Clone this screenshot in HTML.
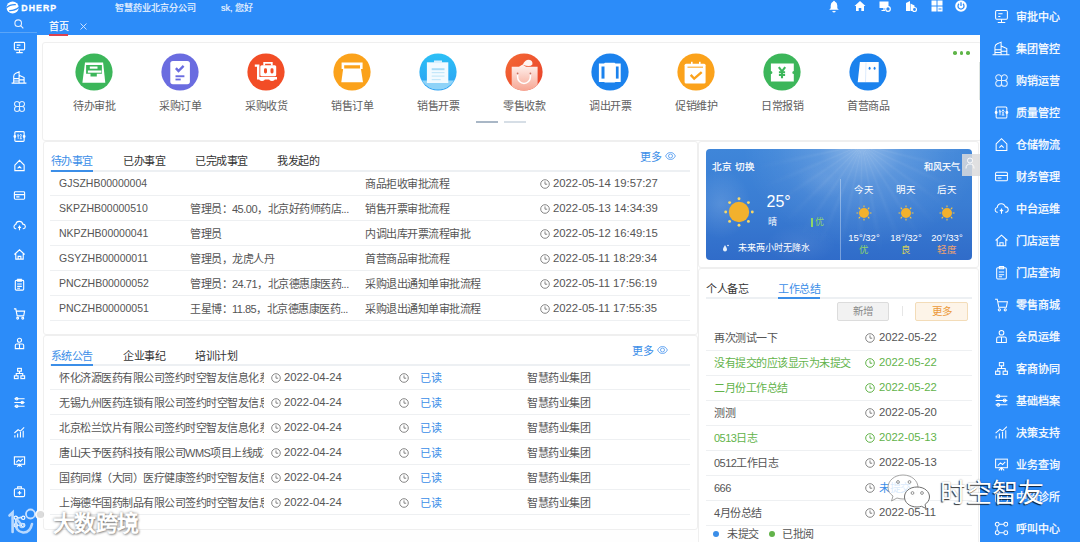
<!DOCTYPE html>
<html lang="zh-CN"><head><meta charset="utf-8">
<style>
*{box-sizing:border-box;margin:0;padding:0}
body{width:1080px;height:542px;overflow:hidden;position:relative;background:#2c8cf9;font-family:"Liberation Sans",sans-serif;color:#555}
.a{position:absolute}
.nw{white-space:nowrap}
#main{left:37px;top:35.3px;width:943px;height:507px;background:#fefefe}
.card{position:absolute;background:#fff;border:1px solid #efefef;border-radius:3px}
.ic{position:absolute;width:38px;height:38px;border-radius:50%}
.lbl{position:absolute;font-size:11px;letter-spacing:-0.5px;color:#606060;width:80px;text-align:center;line-height:12px}
.tab{position:absolute;font-size:11px;letter-spacing:-0.5px;color:#333;line-height:12px}
.tab.on{color:#3b8ee8}
.row{position:absolute;height:25px;border-bottom:1px solid #eef0f2}
.d{position:absolute;font-size:11.3px;line-height:12px;color:#555;white-space:nowrap}
.c{position:absolute;font-size:10.5px;line-height:12px;color:#555;white-space:nowrap}
.t{position:absolute;font-size:11px;letter-spacing:-0.5px;line-height:12px;color:#555;white-space:nowrap}
.clk{position:absolute;width:9px;height:9px;border:1px solid #666;border-radius:50%}
.clk:after{content:"";position:absolute;left:3px;top:1px;width:2px;height:3px;border-left:1px solid #666;border-bottom:1px solid #666}
.sbt{-webkit-text-stroke:0.25px #fff}
.rs{position:absolute;left:980px;width:100px;height:32px}
.rs .tx{position:absolute;left:36px;top:10px;font-size:11px;line-height:12px;color:#fff;white-space:nowrap}
.rs svg{position:absolute;left:14px;top:8px}
.ls{position:absolute;left:12px;width:14px;height:14px}
</style></head><body>
<!-- header -->
<div class="a" style="left:0;top:0;width:980px;height:35.3px;background:#2c8cf9"></div>
<div class="a nw" style="left:21.3px;top:2px;font-size:8.7px;font-weight:bold;color:#fff;line-height:12px;letter-spacing:1.1px;-webkit-text-stroke:0.3px #fff">DHERP</div>
<div class="a nw" style="left:114.5px;top:2.5px;font-size:9px;color:#eaf3ff;line-height:11px;-webkit-text-stroke:0.2px #eaf3ff">智慧药业北京分公司</div>
<div class="a nw" style="left:221px;top:2.5px;font-size:9px;color:#eaf3ff;line-height:11px;-webkit-text-stroke:0.2px #eaf3ff">sk, 您好</div>
<div class="a nw" style="left:49px;top:21px;font-size:10px;color:#fff;line-height:12px;-webkit-text-stroke:0.2px #fff">首页</div>
<div class="a" style="left:49px;top:33.6px;width:19px;height:2px;background:#dc4150;z-index:5"></div>
<svg class="a" style="left:79.5px;top:22.5px" width="7" height="7" viewBox="0 0 7 7"><path d="M0.5 0.5L6.5 6.5M6.5 0.5L0.5 6.5" stroke="#dceaff" stroke-width="0.9"/></svg>
<div class="a" style="left:0;top:32px;width:37px;height:1px;background:#5aa5f8"></div>

<div id="main" class="a"></div>
<!-- card1 -->
<div class="card" style="left:42px;top:42px;width:940px;height:99px"></div><div class="a" style="left:978.5px;top:62px;width:1.5px;height:38px;background:#dfe5e2"></div>
<div class="card" style="left:43px;top:141px;width:655px;height:194px"></div>
<div class="card" style="left:43px;top:335px;width:655px;height:195px"></div>
<div class="card" style="left:698px;top:141px;width:281px;height:127px"></div>
<div class="card" style="left:698px;top:268px;width:281px;height:280px"></div>

<!-- icon row -->
<svg class="a" style="left:75px;top:53.3px" width="38" height="38" viewBox="0 0 38 38"><circle cx="19" cy="19" r="18.6" fill="#3cb65a"/>
<path d="M10 9.4H28.1L30.3 29.7H7.4Z" fill="#fff"/>
<path d="M11.1 12H26.9V20.8H21.8V23.4H15.5V20.8H11.1Z" fill="#3cb65a"/>
<rect x="14.8" y="13.5" width="7.7" height="2.2" fill="#fff"/><rect x="12.9" y="17.5" width="13.5" height="2.2" fill="#fff"/></svg>
<div class="lbl" style="left:54px;top:100px">待办审批</div>
<svg class="a" style="left:161px;top:53.3px" width="38" height="38" viewBox="0 0 38 38"><circle cx="19" cy="19" r="18.6" fill="#6a6ce0"/>
<rect x="9.3" y="7.9" width="19.6" height="23.3" rx="2.6" fill="#fff"/>
<path d="M14.9 15.1L17.5 18L22.6 12.9" stroke="#6a6ce0" stroke-width="2.4" fill="none"/>
<rect x="14.5" y="22.3" width="8.9" height="1.9" fill="#6a6ce0"/>
<rect x="14.5" y="25.6" width="5.2" height="1.8" fill="#6a6ce0"/></svg>
<div class="lbl" style="left:140px;top:100px">采购订单</div>
<svg class="a" style="left:247px;top:53.3px" width="38" height="38" viewBox="0 0 38 38"><circle cx="19" cy="19" r="18.6" fill="#f24d26"/>
<path d="M7.8 12.6H11.2V25.2H30" stroke="#fff" stroke-width="2.4" fill="none"/>
<rect x="13.3" y="12.2" width="15.9" height="11" rx="1.5" fill="#fff"/>
<path d="M17.2 12.5V9.8H24.8V12.5" stroke="#fff" stroke-width="1.8" fill="none"/>
<rect x="17" y="15.3" width="3" height="5.2" rx="1.4" fill="#f24d26"/><rect x="23.5" y="15.3" width="3" height="5.2" rx="1.4" fill="#f24d26"/>
<path d="M12 25H18A3 3 0 0 1 12 25ZM22 25H28A3 3 0 0 1 22 25Z" fill="#fff"/></svg>
<div class="lbl" style="left:226px;top:100px">采购收货</div>
<svg class="a" style="left:333px;top:53.3px" width="38" height="38" viewBox="0 0 38 38"><circle cx="19" cy="19" r="18.6" fill="#fba21b"/>
<path d="M8.6 9.6H29.6V16H27V12.2H11.2V16H8.6Z" fill="#fff"/>
<path d="M10.2 15.6H27.9L30 29.2H8.3Z" fill="#fff"/></svg>
<div class="lbl" style="left:312px;top:100px">销售订单</div>
<svg class="a" style="left:419px;top:53.3px" width="38" height="38" viewBox="0 0 38 38"><defs><linearGradient id="g5" x1="0" y1="0" x2="0" y2="1"><stop offset="0" stop-color="#2cc0f6"/><stop offset="1" stop-color="#2b9ff2"/></linearGradient></defs>
<circle cx="19" cy="19" r="18.6" fill="url(#g5)"/>
<path d="M3 27.5H35A18.6 18.6 0 0 1 3 27.5Z" fill="#8fd3f8"/>
<rect x="7.9" y="9.3" width="21.4" height="20.7" fill="#f2faff"/>
<rect x="15" y="7.5" width="8" height="2.6" fill="#d8f0fd"/>
<rect x="12.7" y="15.2" width="12.8" height="2" fill="#a8dcf7"/><rect x="12.7" y="19" width="12.8" height="1.2" fill="#c4e7fa"/><rect x="12.7" y="22.5" width="12.8" height="1.2" fill="#c4e7fa"/><rect x="12.7" y="26" width="9" height="1.2" fill="#c4e7fa"/></svg>
<div class="lbl" style="left:398px;top:100px">销售开票</div>
<svg class="a" style="left:505px;top:53.3px" width="38" height="38" viewBox="0 0 38 38"><defs><linearGradient id="g6" x1="0" y1="0" x2="1" y2="1"><stop offset="0" stop-color="#f46a35"/><stop offset="1" stop-color="#e8402a"/></linearGradient><linearGradient id="b6" x1="0" y1="0" x2="0" y2="1"><stop offset="0" stop-color="#fff3ef"/><stop offset="1" stop-color="#f6a390"/></linearGradient><clipPath id="c6"><circle cx="19" cy="19" r="18.6"/></clipPath></defs>
<circle cx="19" cy="19" r="18.6" fill="url(#g6)"/>
<g clip-path="url(#c6)"><path d="M6.7 13.8H14L17.5 11.5L21 13.8H32.6V38H6.7Z" fill="url(#b6)"/></g>
<path d="M12.6 20.5V24A6.4 6.4 0 0 0 25.4 24V20.5" stroke="#fff" stroke-width="1.5" fill="none"/>
<circle cx="12.6" cy="20.5" r="0.9" fill="#c96e5d"/><circle cx="25.4" cy="20.5" r="0.9" fill="#c96e5d"/>
<path d="M17.8 11.8Q20 6.5 24 6.7Q28 7.2 27.4 11.5Q25 14.5 17.8 11.8Z" fill="#fff5f2"/></svg>
<div class="lbl" style="left:484px;top:100px">零售收款</div>
<svg class="a" style="left:591px;top:53.3px" width="38" height="38" viewBox="0 0 38 38"><circle cx="19" cy="19" r="18.6" fill="#1b82ed"/>
<path d="M7.9 10.5H13L14 9.8H23.5L24.5 10.5H29.7V29H24.5L23.5 29.6H14L13 29H7.9Z" fill="#fff"/>
<rect x="10.5" y="13.5" width="3" height="12.1" fill="#1b82ed"/><rect x="24.9" y="13.5" width="2.7" height="12.1" fill="#1b82ed"/></svg>
<div class="lbl" style="left:570px;top:100px">调出开票</div>
<svg class="a" style="left:677px;top:53.3px" width="38" height="38" viewBox="0 0 38 38"><circle cx="19" cy="19" r="18.6" fill="#fba21b"/>
<rect x="7.6" y="10.7" width="21" height="19.9" rx="1.5" fill="#fff"/>
<rect x="10.5" y="13.6" width="15.5" height="1.2" fill="#fba21b" opacity="0.85"/>
<rect x="14" y="8.8" width="1.6" height="3.5" fill="#fff"/><rect x="22" y="8.8" width="1.6" height="3.5" fill="#fff"/>
<path d="M13.7 21.9L17.2 25.7L24.7 19.2" stroke="#fba21b" stroke-width="2.4" fill="none"/></svg>
<div class="lbl" style="left:656px;top:100px">促销维护</div>
<svg class="a" style="left:763px;top:53.3px" width="38" height="38" viewBox="0 0 38 38"><circle cx="19" cy="19" r="18.6" fill="#3cb65a"/>
<path d="M7.9 10.5H30.8V17.9A1.5 1.5 0 0 0 30.8 20.9V28.6H7.9V20.9A1.5 1.5 0 0 0 7.9 17.9Z" fill="#fff"/>
<path d="M15.8 14.2L19 18.3L22.2 14.2M19 18.3V25.2M15.9 19.3H22.1M15.9 22H22.1" stroke="#3cb65a" stroke-width="2.1" fill="none"/></svg>
<div class="lbl" style="left:742px;top:100px">日常报销</div>
<svg class="a" style="left:849px;top:53.3px" width="38" height="38" viewBox="0 0 38 38"><circle cx="19" cy="19" r="18.6" fill="#1b82ed"/>
<path d="M10.9 9H29.7V29.3H16.4L16.8 17L16.4 29.3H8.7Z" fill="#fff"/>
<path d="M17 9.5L16.5 29" stroke="#cfe3fb" stroke-width="0.7"/>
<ellipse cx="20.6" cy="15.3" rx="0.95" ry="1.5" fill="#1b82ed"/><ellipse cx="25.6" cy="15.3" rx="0.95" ry="1.5" fill="#1b82ed"/></svg>
<div class="lbl" style="left:828px;top:100px">首营商品</div>
<div class="a" style="left:476px;top:121px;width:22px;height:2px;background:#a9b7c6"></div>
<div class="a" style="left:504px;top:121px;width:22px;height:2px;background:#d6dee6"></div>
<div class="a" style="left:953.2px;top:51.2px;width:3.5px;height:3.5px;border-radius:50%;background:#5fb548"></div><div class="a" style="left:959.8px;top:51.2px;width:3.5px;height:3.5px;border-radius:50%;background:#5fb548"></div><div class="a" style="left:966.4px;top:51.2px;width:3.5px;height:3.5px;border-radius:50%;background:#5fb548"></div>
<!-- card2 todo -->
<div class="a" style="left:50px;top:169.5px;width:640px;height:2px;background:#edf0f3"></div>
<div class="tab on" style="left:50.5px;top:155px">待办事宜</div>
<div class="tab" style="left:123px;top:155px">已办事宜</div>
<div class="tab" style="left:195px;top:155px">已完成事宜</div>
<div class="tab" style="left:277px;top:155px">我发起的</div>
<div class="a" style="left:50.5px;top:169.5px;width:42.5px;height:2px;background:#3b8ee8"></div>
<div class="t" style="left:640px;top:150.6px;color:#3b8ee8">更多</div>
<svg class="a" style="left:665px;top:152px" width="11" height="8" viewBox="0 0 11 8"><path d="M0.6 4C2 1.2 3.8 0.5 5.5 0.5S9 1.2 10.4 4C9 6.8 7.2 7.5 5.5 7.5S2 6.8 0.6 4Z" fill="none" stroke="#5a9ff0" stroke-width="0.9"/><circle cx="5.5" cy="4" r="2" fill="none" stroke="#5a9ff0" stroke-width="0.9"/></svg>
<div class="a" style="left:50px;top:195px;width:640px;height:1px;background:#eef0f2"></div>
<div class="c" style="left:59px;top:177.0px">GJSZHB00000004</div>
<div class="t" style="left:365px;top:177.6px">商品拒收审批流程</div>
<svg class="a" style="left:540px;top:178.8px" width="10" height="10" viewBox="0 0 10 10"><circle cx="5" cy="5" r="4.3" fill="none" stroke="#808080" stroke-width="0.95"/><path d="M5 2.4V5.2H7.2" fill="none" stroke="#808080" stroke-width="0.95"/></svg>
<div class="d" style="left:553px;top:177.0px">2022-05-14 19:57:27</div>
<div class="a" style="left:50px;top:220px;width:640px;height:1px;background:#eef0f2"></div>
<div class="c" style="left:59px;top:202.0px">SKPZHB00000510</div>
<div class="t" style="left:190px;top:202.6px">管理员：45.00，北京好药师药店...</div>
<div class="t" style="left:365px;top:202.6px">销售开票审批流程</div>
<svg class="a" style="left:540px;top:203.8px" width="10" height="10" viewBox="0 0 10 10"><circle cx="5" cy="5" r="4.3" fill="none" stroke="#808080" stroke-width="0.95"/><path d="M5 2.4V5.2H7.2" fill="none" stroke="#808080" stroke-width="0.95"/></svg>
<div class="d" style="left:553px;top:202.0px">2022-05-13 14:34:39</div>
<div class="a" style="left:50px;top:245px;width:640px;height:1px;background:#eef0f2"></div>
<div class="c" style="left:59px;top:227.0px">NKPZHB00000041</div>
<div class="t" style="left:190px;top:227.6px">管理员</div>
<div class="t" style="left:365px;top:227.6px">内调出库开票流程审批</div>
<svg class="a" style="left:540px;top:228.8px" width="10" height="10" viewBox="0 0 10 10"><circle cx="5" cy="5" r="4.3" fill="none" stroke="#808080" stroke-width="0.95"/><path d="M5 2.4V5.2H7.2" fill="none" stroke="#808080" stroke-width="0.95"/></svg>
<div class="d" style="left:553px;top:227.0px">2022-05-12 16:49:15</div>
<div class="a" style="left:50px;top:270px;width:640px;height:1px;background:#eef0f2"></div>
<div class="c" style="left:59px;top:252.0px">GSYZHB00000011</div>
<div class="t" style="left:190px;top:252.6px">管理员，龙虎人丹</div>
<div class="t" style="left:365px;top:252.6px">首营商品审批流程</div>
<svg class="a" style="left:540px;top:253.8px" width="10" height="10" viewBox="0 0 10 10"><circle cx="5" cy="5" r="4.3" fill="none" stroke="#808080" stroke-width="0.95"/><path d="M5 2.4V5.2H7.2" fill="none" stroke="#808080" stroke-width="0.95"/></svg>
<div class="d" style="left:553px;top:252.0px">2022-05-11 18:29:34</div>
<div class="a" style="left:50px;top:295px;width:640px;height:1px;background:#eef0f2"></div>
<div class="c" style="left:59px;top:277.0px">PNCZHB00000052</div>
<div class="t" style="left:190px;top:277.6px">管理员：24.71，北京德惠康医药...</div>
<div class="t" style="left:365px;top:277.6px">采购退出通知单审批流程</div>
<svg class="a" style="left:540px;top:278.8px" width="10" height="10" viewBox="0 0 10 10"><circle cx="5" cy="5" r="4.3" fill="none" stroke="#808080" stroke-width="0.95"/><path d="M5 2.4V5.2H7.2" fill="none" stroke="#808080" stroke-width="0.95"/></svg>
<div class="d" style="left:553px;top:277.0px">2022-05-11 17:56:19</div>
<div class="a" style="left:50px;top:320px;width:640px;height:1px;background:#eef0f2"></div>
<div class="c" style="left:59px;top:302.0px">PNCZHB00000051</div>
<div class="t" style="left:190px;top:302.6px">王星博：11.85，北京德惠康医药...</div>
<div class="t" style="left:365px;top:302.6px">采购退出通知单审批流程</div>
<svg class="a" style="left:540px;top:303.8px" width="10" height="10" viewBox="0 0 10 10"><circle cx="5" cy="5" r="4.3" fill="none" stroke="#808080" stroke-width="0.95"/><path d="M5 2.4V5.2H7.2" fill="none" stroke="#808080" stroke-width="0.95"/></svg>
<div class="d" style="left:553px;top:302.0px">2022-05-11 17:55:35</div>
<!-- card3 notice -->
<div class="a" style="left:50px;top:364px;width:640px;height:2px;background:#edf0f3"></div>
<div class="tab on" style="left:50.5px;top:350px">系统公告</div>
<div class="tab" style="left:123px;top:350px">企业事纪</div>
<div class="tab" style="left:195px;top:350px">培训计划</div>
<div class="a" style="left:50.5px;top:364px;width:42.5px;height:2px;background:#3b8ee8"></div>
<div class="t" style="left:632px;top:344.6px;color:#3b8ee8">更多</div>
<svg class="a" style="left:657px;top:346px" width="11" height="8" viewBox="0 0 11 8"><path d="M0.6 4C2 1.2 3.8 0.5 5.5 0.5S9 1.2 10.4 4C9 6.8 7.2 7.5 5.5 7.5S2 6.8 0.6 4Z" fill="none" stroke="#5a9ff0" stroke-width="0.9"/><circle cx="5.5" cy="4" r="2" fill="none" stroke="#5a9ff0" stroke-width="0.9"/></svg>
<div class="a" style="left:50px;top:389px;width:640px;height:1px;background:#eef0f2"></div>
<div class="t" style="left:59px;top:371.6px;width:205px;overflow:hidden">怀化济源医药有限公司签约时空智友信息化系统</div>
<svg class="a" style="left:271px;top:372.8px" width="10" height="10" viewBox="0 0 10 10"><circle cx="5" cy="5" r="4.3" fill="none" stroke="#808080" stroke-width="0.95"/><path d="M5 2.4V5.2H7.2" fill="none" stroke="#808080" stroke-width="0.95"/></svg>
<div class="d" style="left:284px;top:371.0px">2022-04-24</div>
<svg class="a" style="left:399px;top:372.8px" width="10" height="10" viewBox="0 0 10 10"><circle cx="5" cy="5" r="4.3" fill="none" stroke="#808080" stroke-width="0.95"/><path d="M5 2.4V5.2H7.2" fill="none" stroke="#808080" stroke-width="0.95"/></svg>
<div class="t" style="left:420px;top:371.6px;color:#3b8ee8">已读</div>
<div class="t" style="left:527px;top:371.6px">智慧药业集团</div>
<div class="a" style="left:50px;top:414px;width:640px;height:1px;background:#eef0f2"></div>
<div class="t" style="left:59px;top:396.6px;width:205px;overflow:hidden">无锡九州医药连锁有限公司签约时空智友信息化</div>
<svg class="a" style="left:271px;top:397.8px" width="10" height="10" viewBox="0 0 10 10"><circle cx="5" cy="5" r="4.3" fill="none" stroke="#808080" stroke-width="0.95"/><path d="M5 2.4V5.2H7.2" fill="none" stroke="#808080" stroke-width="0.95"/></svg>
<div class="d" style="left:284px;top:396.0px">2022-04-24</div>
<svg class="a" style="left:399px;top:397.8px" width="10" height="10" viewBox="0 0 10 10"><circle cx="5" cy="5" r="4.3" fill="none" stroke="#808080" stroke-width="0.95"/><path d="M5 2.4V5.2H7.2" fill="none" stroke="#808080" stroke-width="0.95"/></svg>
<div class="t" style="left:420px;top:396.6px;color:#3b8ee8">已读</div>
<div class="t" style="left:527px;top:396.6px">智慧药业集团</div>
<div class="a" style="left:50px;top:439px;width:640px;height:1px;background:#eef0f2"></div>
<div class="t" style="left:59px;top:421.6px;width:205px;overflow:hidden">北京松兰饮片有限公司签约时空智友信息化系统</div>
<svg class="a" style="left:271px;top:422.8px" width="10" height="10" viewBox="0 0 10 10"><circle cx="5" cy="5" r="4.3" fill="none" stroke="#808080" stroke-width="0.95"/><path d="M5 2.4V5.2H7.2" fill="none" stroke="#808080" stroke-width="0.95"/></svg>
<div class="d" style="left:284px;top:421.0px">2022-04-24</div>
<svg class="a" style="left:399px;top:422.8px" width="10" height="10" viewBox="0 0 10 10"><circle cx="5" cy="5" r="4.3" fill="none" stroke="#808080" stroke-width="0.95"/><path d="M5 2.4V5.2H7.2" fill="none" stroke="#808080" stroke-width="0.95"/></svg>
<div class="t" style="left:420px;top:421.6px;color:#3b8ee8">已读</div>
<div class="t" style="left:527px;top:421.6px">智慧药业集团</div>
<div class="a" style="left:50px;top:464px;width:640px;height:1px;background:#eef0f2"></div>
<div class="t" style="left:59px;top:446.6px;width:205px;overflow:hidden">唐山天予医药科技有限公司WMS项目上线成功</div>
<svg class="a" style="left:271px;top:447.8px" width="10" height="10" viewBox="0 0 10 10"><circle cx="5" cy="5" r="4.3" fill="none" stroke="#808080" stroke-width="0.95"/><path d="M5 2.4V5.2H7.2" fill="none" stroke="#808080" stroke-width="0.95"/></svg>
<div class="d" style="left:284px;top:446.0px">2022-04-24</div>
<svg class="a" style="left:399px;top:447.8px" width="10" height="10" viewBox="0 0 10 10"><circle cx="5" cy="5" r="4.3" fill="none" stroke="#808080" stroke-width="0.95"/><path d="M5 2.4V5.2H7.2" fill="none" stroke="#808080" stroke-width="0.95"/></svg>
<div class="t" style="left:420px;top:446.6px;color:#3b8ee8">已读</div>
<div class="t" style="left:527px;top:446.6px">智慧药业集团</div>
<div class="a" style="left:50px;top:489px;width:640px;height:1px;background:#eef0f2"></div>
<div class="t" style="left:59px;top:471.6px;width:205px;overflow:hidden">国药同煤（大同）医疗健康签约时空智友信息化</div>
<svg class="a" style="left:271px;top:472.8px" width="10" height="10" viewBox="0 0 10 10"><circle cx="5" cy="5" r="4.3" fill="none" stroke="#808080" stroke-width="0.95"/><path d="M5 2.4V5.2H7.2" fill="none" stroke="#808080" stroke-width="0.95"/></svg>
<div class="d" style="left:284px;top:471.0px">2022-04-24</div>
<svg class="a" style="left:399px;top:472.8px" width="10" height="10" viewBox="0 0 10 10"><circle cx="5" cy="5" r="4.3" fill="none" stroke="#808080" stroke-width="0.95"/><path d="M5 2.4V5.2H7.2" fill="none" stroke="#808080" stroke-width="0.95"/></svg>
<div class="t" style="left:420px;top:471.6px;color:#3b8ee8">已读</div>
<div class="t" style="left:527px;top:471.6px">智慧药业集团</div>
<div class="a" style="left:50px;top:514px;width:640px;height:1px;background:#eef0f2"></div>
<div class="t" style="left:59px;top:496.6px;width:205px;overflow:hidden">上海德华国药制品有限公司签约时空智友信息化</div>
<svg class="a" style="left:271px;top:497.8px" width="10" height="10" viewBox="0 0 10 10"><circle cx="5" cy="5" r="4.3" fill="none" stroke="#808080" stroke-width="0.95"/><path d="M5 2.4V5.2H7.2" fill="none" stroke="#808080" stroke-width="0.95"/></svg>
<div class="d" style="left:284px;top:496.0px">2022-04-24</div>
<svg class="a" style="left:399px;top:497.8px" width="10" height="10" viewBox="0 0 10 10"><circle cx="5" cy="5" r="4.3" fill="none" stroke="#808080" stroke-width="0.95"/><path d="M5 2.4V5.2H7.2" fill="none" stroke="#808080" stroke-width="0.95"/></svg>
<div class="t" style="left:420px;top:496.6px;color:#3b8ee8">已读</div>
<div class="t" style="left:527px;top:496.6px">智慧药业集团</div>
<!-- memo card -->
<div class="a" style="left:706px;top:297px;width:266px;height:2px;background:#edf0f3"></div>
<div class="tab" style="left:706px;top:282.5px">个人备忘</div>
<div class="tab on" style="left:778px;top:282.5px">工作总结</div>
<div class="a" style="left:778px;top:297px;width:42px;height:2px;background:#3b8ee8"></div>
<div class="a" style="left:837px;top:302px;width:52px;height:19px;background:#f2f2f2;border:1px solid #dcdcdc;border-radius:2px;font-size:10.5px;line-height:17px;color:#888;text-align:center">新增</div>
<div class="a" style="left:902px;top:306px;width:1px;height:10px;background:#e6e6e6"></div>
<div class="a" style="left:915px;top:302px;width:53px;height:19px;background:#fdf4e8;border:1px solid #f3dcb8;border-radius:2px;font-size:10.5px;line-height:17px;color:#ec9a3a;text-align:center">更多</div>
<div class="a" style="left:706px;top:349.5px;width:266px;height:1px;background:#eef0f2"></div>
<div class="t" style="left:714px;top:331.6px;color:#555">再次测试一下</div>
<svg class="a" style="left:865px;top:332.8px" width="10" height="10" viewBox="0 0 10 10"><circle cx="5" cy="5" r="4.3" fill="none" stroke="#808080" stroke-width="0.95"/><path d="M5 2.4V5.2H7.2" fill="none" stroke="#808080" stroke-width="0.95"/></svg>
<div class="d" style="left:879px;top:331.0px;color:#555">2022-05-22</div>
<div class="a" style="left:706px;top:374.5px;width:266px;height:1px;background:#eef0f2"></div>
<div class="t" style="left:714px;top:356.6px;color:#62b34a">没有提交的应该显示为未提交</div>
<svg class="a" style="left:865px;top:357.8px" width="10" height="10" viewBox="0 0 10 10"><circle cx="5" cy="5" r="4.3" fill="none" stroke="#62b34a" stroke-width="1"/><path d="M5 2.4V5.2H7.2" fill="none" stroke="#62b34a" stroke-width="1"/></svg>
<div class="d" style="left:879px;top:356.0px;color:#62b34a">2022-05-22</div>
<div class="a" style="left:706px;top:399.5px;width:266px;height:1px;background:#eef0f2"></div>
<div class="t" style="left:714px;top:381.6px;color:#62b34a">二月份工作总结</div>
<svg class="a" style="left:865px;top:382.8px" width="10" height="10" viewBox="0 0 10 10"><circle cx="5" cy="5" r="4.3" fill="none" stroke="#62b34a" stroke-width="1"/><path d="M5 2.4V5.2H7.2" fill="none" stroke="#62b34a" stroke-width="1"/></svg>
<div class="d" style="left:879px;top:381.0px;color:#62b34a">2022-05-22</div>
<div class="a" style="left:706px;top:424.5px;width:266px;height:1px;background:#eef0f2"></div>
<div class="t" style="left:714px;top:406.6px;color:#555">测测</div>
<svg class="a" style="left:865px;top:407.8px" width="10" height="10" viewBox="0 0 10 10"><circle cx="5" cy="5" r="4.3" fill="none" stroke="#808080" stroke-width="0.95"/><path d="M5 2.4V5.2H7.2" fill="none" stroke="#808080" stroke-width="0.95"/></svg>
<div class="d" style="left:879px;top:406.0px;color:#555">2022-05-20</div>
<div class="a" style="left:706px;top:449.5px;width:266px;height:1px;background:#eef0f2"></div>
<div class="t" style="left:714px;top:431.6px;color:#62b34a">0513日志</div>
<svg class="a" style="left:865px;top:432.8px" width="10" height="10" viewBox="0 0 10 10"><circle cx="5" cy="5" r="4.3" fill="none" stroke="#62b34a" stroke-width="1"/><path d="M5 2.4V5.2H7.2" fill="none" stroke="#62b34a" stroke-width="1"/></svg>
<div class="d" style="left:879px;top:431.0px;color:#62b34a">2022-05-13</div>
<div class="a" style="left:706px;top:474.5px;width:266px;height:1px;background:#eef0f2"></div>
<div class="t" style="left:714px;top:456.6px;color:#555">0512工作日志</div>
<svg class="a" style="left:865px;top:457.8px" width="10" height="10" viewBox="0 0 10 10"><circle cx="5" cy="5" r="4.3" fill="none" stroke="#808080" stroke-width="0.95"/><path d="M5 2.4V5.2H7.2" fill="none" stroke="#808080" stroke-width="0.95"/></svg>
<div class="d" style="left:879px;top:456.0px;color:#555">2022-05-13</div>
<div class="a" style="left:706px;top:499.5px;width:266px;height:1px;background:#eef0f2"></div>
<div class="t" style="left:714px;top:481.6px;color:#555">666</div>
<svg class="a" style="left:865px;top:482.8px" width="10" height="10" viewBox="0 0 10 10"><circle cx="5" cy="5" r="4.3" fill="none" stroke="#808080" stroke-width="0.95"/><path d="M5 2.4V5.2H7.2" fill="none" stroke="#808080" stroke-width="0.95"/></svg>
<div class="t" style="left:879px;top:481.6px;color:#3b8ee8">未提交</div>
<div class="a" style="left:706px;top:524.5px;width:266px;height:1px;background:#eef0f2"></div>
<div class="t" style="left:714px;top:506.6px;color:#555">4月份总结</div>
<svg class="a" style="left:865px;top:507.8px" width="10" height="10" viewBox="0 0 10 10"><circle cx="5" cy="5" r="4.3" fill="none" stroke="#808080" stroke-width="0.95"/><path d="M5 2.4V5.2H7.2" fill="none" stroke="#808080" stroke-width="0.95"/></svg>
<div class="d" style="left:879px;top:506.0px;color:#555">2022-05-11</div>
<div class="a" style="left:713px;top:531px;width:6px;height:6px;border-radius:50%;background:#3b8ee8"></div>
<div class="t" style="left:727px;top:527.6px">未提交</div>
<div class="a" style="left:769px;top:531px;width:6px;height:6px;border-radius:50%;background:#62b34a"></div>
<div class="t" style="left:782px;top:527.6px">已批阅</div>
<!-- right sidebar -->
<div class="a" style="left:980px;top:0;width:100px;height:542px;background:#2c8cf9"></div>
<!-- sidebars -->
<svg class="a" style="left:993.5px;top:9.0px" width="15" height="15" viewBox="0 0 14 14" fill="none" stroke="#fff" stroke-width="0.95"><rect x="1.5" y="1.5" width="11" height="8" rx="1"/><path d="M4 4.5H8M4 7H6M7 9.5V12.5M3.5 12.5H10.5"/></svg>
<div class="a nw" style="left:1016px;top:10.5px;font-size:11px;line-height:13px;color:#fff;-webkit-text-stroke:0.25px #fff">审批中心</div>
<svg class="a" style="left:992.0px;top:41.0px" width="18" height="15" viewBox="0 0 17 14" fill="none" stroke="#fff" stroke-width="0.95"><path d="M0.5 13H16.5M2.8 13V5.8Q2.8 3.5 5 2.5L8.6 1V13M8.6 4.6L14 7V13M2.8 8.2H8.6M2.8 10.7H8.6M8.6 9.5H14"/></svg>
<div class="a nw" style="left:1016px;top:42.5px;font-size:11px;line-height:13px;color:#fff;-webkit-text-stroke:0.25px #fff">集团管控</div>
<svg class="a" style="left:993.5px;top:73.0px" width="15" height="15" viewBox="0 0 14 14" fill="none" stroke="#fff" stroke-width="0.95"><path d="M7 7V4.3A2.7 2.7 0 1 0 4.3 7ZM7 7H9.7A2.7 2.7 0 1 0 7 4.3ZM7 7V9.7A2.7 2.7 0 1 0 9.7 7ZM7 7H4.3A2.7 2.7 0 1 0 7 9.7Z" stroke-opacity="0.85"/></svg>
<div class="a nw" style="left:1016px;top:74.5px;font-size:11px;line-height:13px;color:#fff;-webkit-text-stroke:0.25px #fff">购销运营</div>
<svg class="a" style="left:993.5px;top:105.0px" width="15" height="15" viewBox="0 0 14 14" fill="none" stroke="#fff" stroke-width="0.95"><rect x="2" y="1.8" width="10" height="10.4" rx="1"/><circle cx="2" cy="7" r="0.9" fill="#fff"/><circle cx="12" cy="7" r="0.9" fill="#fff"/><path d="M4.8 5.2L5.6 4.5V9.6M4.5 6.4H6.6M8.4 4.4L7.2 6.4M8.4 4.4L9.6 6.4M7.6 7.2H9.2M7.2 9.4H9.7M8.4 7.2V9.4" stroke-width="0.8"/></svg>
<div class="a nw" style="left:1016px;top:106.5px;font-size:11px;line-height:13px;color:#fff;-webkit-text-stroke:0.25px #fff">质量管控</div>
<svg class="a" style="left:993.5px;top:137.0px" width="15" height="15" viewBox="0 0 14 14" fill="none" stroke="#fff" stroke-width="0.95"><path d="M2 6.5L7 1.5L12 6.5V12.5H2Z M5 10L7 8L9 10"/></svg>
<div class="a nw" style="left:1016px;top:138.5px;font-size:11px;line-height:13px;color:#fff;-webkit-text-stroke:0.25px #fff">仓储物流</div>
<svg class="a" style="left:993.5px;top:169.0px" width="15" height="15" viewBox="0 0 14 14" fill="none" stroke="#fff" stroke-width="0.95"><rect x="1.5" y="3" width="11" height="8" rx="1"/><path d="M1.5 6H12.5M3.5 8.5H7"/></svg>
<div class="a nw" style="left:1016px;top:170.5px;font-size:11px;line-height:13px;color:#fff;-webkit-text-stroke:0.25px #fff">财务管理</div>
<svg class="a" style="left:993.5px;top:201.0px" width="15" height="15" viewBox="0 0 14 14" fill="none" stroke="#fff" stroke-width="0.95"><path d="M3.5 10.5H2.8A2.3 2.3 0 0 1 3 6A3.8 3.8 0 0 1 10.5 5.5A2.5 2.5 0 0 1 11 10.5H10.5M7 7V12M5.5 9.5L7 8L8.5 9.5"/></svg>
<div class="a nw" style="left:1016px;top:202.5px;font-size:11px;line-height:13px;color:#fff;-webkit-text-stroke:0.25px #fff">中台运维</div>
<svg class="a" style="left:993.5px;top:233.0px" width="15" height="15" viewBox="0 0 14 14" fill="none" stroke="#fff" stroke-width="0.95"><path d="M1.5 7L7 2L12.5 7M3 6V12H11V6M5.5 12V9H8.5V12"/></svg>
<div class="a nw" style="left:1016px;top:234.5px;font-size:11px;line-height:13px;color:#fff;-webkit-text-stroke:0.25px #fff">门店运营</div>
<svg class="a" style="left:993.5px;top:265.0px" width="15" height="15" viewBox="0 0 14 14" fill="none" stroke="#fff" stroke-width="0.95"><rect x="2.5" y="2.5" width="9" height="10.5" rx="1"/><path d="M5 1.5H9V3.5H5ZM4.5 6.5H9.5M4.5 9H9.5M4.5 11H7.5"/></svg>
<div class="a nw" style="left:1016px;top:266.5px;font-size:11px;line-height:13px;color:#fff;-webkit-text-stroke:0.25px #fff">门店查询</div>
<svg class="a" style="left:993.5px;top:297.0px" width="15" height="15" viewBox="0 0 14 14" fill="none" stroke="#fff" stroke-width="0.95"><path d="M1 2H3L4.5 9.5H11.5L12.5 4.5H3.8"/><circle cx="5" cy="12" r="1"/><circle cx="10.5" cy="12" r="1"/></svg>
<div class="a nw" style="left:1016px;top:298.5px;font-size:11px;line-height:13px;color:#fff;-webkit-text-stroke:0.25px #fff">零售商城</div>
<svg class="a" style="left:993.5px;top:329.0px" width="15" height="15" viewBox="0 0 14 14" fill="none" stroke="#fff" stroke-width="0.95"><circle cx="7" cy="3.5" r="2.2"/><path d="M2.5 12.5V9A1.5 1.5 0 0 1 4 7.5H10A1.5 1.5 0 0 1 11.5 9V12.5Z M7 7.5V12.5"/></svg>
<div class="a nw" style="left:1016px;top:330.5px;font-size:11px;line-height:13px;color:#fff;-webkit-text-stroke:0.25px #fff">会员运维</div>
<svg class="a" style="left:993.5px;top:361.0px" width="15" height="15" viewBox="0 0 14 14" fill="none" stroke="#fff" stroke-width="0.95"><rect x="5" y="1.5" width="4" height="3"/><rect x="1.5" y="9.5" width="4" height="3"/><rect x="8.5" y="9.5" width="4" height="3"/><path d="M7 4.5V7M3.5 9.5V7H10.5V9.5"/></svg>
<div class="a nw" style="left:1016px;top:362.5px;font-size:11px;line-height:13px;color:#fff;-webkit-text-stroke:0.25px #fff">客商协同</div>
<svg class="a" style="left:993.5px;top:393.0px" width="15" height="15" viewBox="0 0 14 14" fill="none" stroke="#fff" stroke-width="0.95"><path d="M1.5 3H12.5M1.5 7H12.5M1.5 11H12.5"/><circle cx="4" cy="3" r="1.3"/><circle cx="10" cy="7" r="1.3"/><circle cx="4" cy="11" r="1.3"/></svg>
<div class="a nw" style="left:1016px;top:394.5px;font-size:11px;line-height:13px;color:#fff;-webkit-text-stroke:0.25px #fff">基础档案</div>
<svg class="a" style="left:993.5px;top:425.0px" width="15" height="15" viewBox="0 0 14 14" fill="none" stroke="#fff" stroke-width="0.95"><path d="M2 12.5V10M5 12.5V8M8 12.5V6.5M11 12.5V5M1.5 7.5L5.5 4L8 5.5L12 1.5"/></svg>
<div class="a nw" style="left:1016px;top:426.5px;font-size:11px;line-height:13px;color:#fff;-webkit-text-stroke:0.25px #fff">决策支持</div>
<svg class="a" style="left:993.5px;top:457.0px" width="15" height="15" viewBox="0 0 14 14" fill="none" stroke="#fff" stroke-width="0.95"><rect x="1.5" y="2" width="11" height="8"/><path d="M3.5 8L6 5.5L8 7L10.5 4.5M7 10V12.5M4.5 12.5L7 10L9.5 12.5"/></svg>
<div class="a nw" style="left:1016px;top:458.5px;font-size:11px;line-height:13px;color:#fff;-webkit-text-stroke:0.25px #fff">业务查询</div>
<svg class="a" style="left:993.5px;top:489.0px" width="15" height="15" viewBox="0 0 14 14" fill="none" stroke="#fff" stroke-width="0.95"><rect x="1.5" y="4" width="11" height="8.5" rx="1.5"/><path d="M5 4V2H9V4M5 8.5H9M7 6.5V10.5"/></svg>
<div class="a nw" style="left:1016px;top:490.5px;font-size:11px;line-height:13px;color:#fff;-webkit-text-stroke:0.25px #fff">中药诊所</div>
<svg class="a" style="left:993.5px;top:521.0px" width="15" height="15" viewBox="0 0 14 14" fill="none" stroke="#fff" stroke-width="0.95"><circle cx="3" cy="3" r="1.8"/><circle cx="11" cy="3" r="1.8"/><circle cx="3" cy="11" r="1.8"/><circle cx="11" cy="11" r="1.8"/><path d="M4.8 3H9.2M3 4.8V9.2M4.8 11H9.2"/></svg>
<div class="a nw" style="left:1016px;top:522.5px;font-size:11px;line-height:13px;color:#fff;-webkit-text-stroke:0.25px #fff">呼叫中心</div>
<svg class="a" style="left:12.5px;top:41.0px" width="13" height="13" viewBox="0 0 14 14" fill="none" stroke="#fff" stroke-width="1.2"><rect x="1.5" y="1.5" width="11" height="8" rx="1"/><path d="M4 4.5H8M4 7H6M7 9.5V12.5M3.5 12.5H10.5"/></svg>
<svg class="a" style="left:11.0px;top:70.6px" width="16" height="13" viewBox="0 0 17 14" fill="none" stroke="#fff" stroke-width="1.2"><path d="M0.5 13H16.5M2.8 13V5.8Q2.8 3.5 5 2.5L8.6 1V13M8.6 4.6L14 7V13M2.8 8.2H8.6M2.8 10.7H8.6M8.6 9.5H14"/></svg>
<svg class="a" style="left:12.5px;top:100.2px" width="13" height="13" viewBox="0 0 14 14" fill="none" stroke="#fff" stroke-width="1.2"><path d="M7 7V4.3A2.7 2.7 0 1 0 4.3 7ZM7 7H9.7A2.7 2.7 0 1 0 7 4.3ZM7 7V9.7A2.7 2.7 0 1 0 9.7 7ZM7 7H4.3A2.7 2.7 0 1 0 7 9.7Z" stroke-opacity="0.85"/></svg>
<svg class="a" style="left:12.5px;top:129.8px" width="13" height="13" viewBox="0 0 14 14" fill="none" stroke="#fff" stroke-width="1.2"><rect x="2" y="1.8" width="10" height="10.4" rx="1"/><circle cx="2" cy="7" r="0.9" fill="#fff"/><circle cx="12" cy="7" r="0.9" fill="#fff"/><path d="M4.8 5.2L5.6 4.5V9.6M4.5 6.4H6.6M8.4 4.4L7.2 6.4M8.4 4.4L9.6 6.4M7.6 7.2H9.2M7.2 9.4H9.7M8.4 7.2V9.4" stroke-width="0.8"/></svg>
<svg class="a" style="left:12.5px;top:159.4px" width="13" height="13" viewBox="0 0 14 14" fill="none" stroke="#fff" stroke-width="1.2"><path d="M2 6.5L7 1.5L12 6.5V12.5H2Z M5 10L7 8L9 10"/></svg>
<svg class="a" style="left:12.5px;top:189.0px" width="13" height="13" viewBox="0 0 14 14" fill="none" stroke="#fff" stroke-width="1.2"><rect x="1.5" y="3" width="11" height="8" rx="1"/><path d="M1.5 6H12.5M3.5 8.5H7"/></svg>
<svg class="a" style="left:12.5px;top:218.60000000000002px" width="13" height="13" viewBox="0 0 14 14" fill="none" stroke="#fff" stroke-width="1.2"><path d="M3.5 10.5H2.8A2.3 2.3 0 0 1 3 6A3.8 3.8 0 0 1 10.5 5.5A2.5 2.5 0 0 1 11 10.5H10.5M7 7V12M5.5 9.5L7 8L8.5 9.5"/></svg>
<svg class="a" style="left:12.5px;top:248.20000000000002px" width="13" height="13" viewBox="0 0 14 14" fill="none" stroke="#fff" stroke-width="1.2"><path d="M1.5 7L7 2L12.5 7M3 6V12H11V6M5.5 12V9H8.5V12"/></svg>
<svg class="a" style="left:12.5px;top:277.8px" width="13" height="13" viewBox="0 0 14 14" fill="none" stroke="#fff" stroke-width="1.2"><rect x="2.5" y="2.5" width="9" height="10.5" rx="1"/><path d="M5 1.5H9V3.5H5ZM4.5 6.5H9.5M4.5 9H9.5M4.5 11H7.5"/></svg>
<svg class="a" style="left:12.5px;top:307.40000000000003px" width="13" height="13" viewBox="0 0 14 14" fill="none" stroke="#fff" stroke-width="1.2"><path d="M1 2H3L4.5 9.5H11.5L12.5 4.5H3.8"/><circle cx="5" cy="12" r="1"/><circle cx="10.5" cy="12" r="1"/></svg>
<svg class="a" style="left:12.5px;top:337.0px" width="13" height="13" viewBox="0 0 14 14" fill="none" stroke="#fff" stroke-width="1.2"><circle cx="7" cy="3.5" r="2.2"/><path d="M2.5 12.5V9A1.5 1.5 0 0 1 4 7.5H10A1.5 1.5 0 0 1 11.5 9V12.5Z M7 7.5V12.5"/></svg>
<svg class="a" style="left:12.5px;top:366.6px" width="13" height="13" viewBox="0 0 14 14" fill="none" stroke="#fff" stroke-width="1.2"><rect x="5" y="1.5" width="4" height="3"/><rect x="1.5" y="9.5" width="4" height="3"/><rect x="8.5" y="9.5" width="4" height="3"/><path d="M7 4.5V7M3.5 9.5V7H10.5V9.5"/></svg>
<svg class="a" style="left:12.5px;top:396.20000000000005px" width="13" height="13" viewBox="0 0 14 14" fill="none" stroke="#fff" stroke-width="1.2"><path d="M1.5 3H12.5M1.5 7H12.5M1.5 11H12.5"/><circle cx="4" cy="3" r="1.3"/><circle cx="10" cy="7" r="1.3"/><circle cx="4" cy="11" r="1.3"/></svg>
<svg class="a" style="left:12.5px;top:425.8px" width="13" height="13" viewBox="0 0 14 14" fill="none" stroke="#fff" stroke-width="1.2"><path d="M2 12.5V10M5 12.5V8M8 12.5V6.5M11 12.5V5M1.5 7.5L5.5 4L8 5.5L12 1.5"/></svg>
<svg class="a" style="left:12.5px;top:455.40000000000003px" width="13" height="13" viewBox="0 0 14 14" fill="none" stroke="#fff" stroke-width="1.2"><rect x="1.5" y="2" width="11" height="8"/><path d="M3.5 8L6 5.5L8 7L10.5 4.5M7 10V12.5M4.5 12.5L7 10L9.5 12.5"/></svg>
<svg class="a" style="left:12.5px;top:485.0px" width="13" height="13" viewBox="0 0 14 14" fill="none" stroke="#fff" stroke-width="1.2"><rect x="1.5" y="4" width="11" height="8.5" rx="1.5"/><path d="M5 4V2H9V4M5 8.5H9M7 6.5V10.5"/></svg>
<svg class="a" style="left:12.5px;top:514.6px" width="13" height="13" viewBox="0 0 14 14" fill="none" stroke="#fff" stroke-width="1.2"><circle cx="3" cy="3" r="1.8"/><circle cx="11" cy="3" r="1.8"/><circle cx="3" cy="11" r="1.8"/><circle cx="11" cy="11" r="1.8"/><path d="M4.8 3H9.2M3 4.8V9.2M4.8 11H9.2"/></svg>
<svg class="a" style="left:14px;top:19px" width="10" height="10" viewBox="0 0 10 10" fill="none" stroke="#e6f0ff" stroke-width="1.1"><circle cx="4.2" cy="4.2" r="3.3"/><path d="M6.7 6.7L9.3 9.3"/></svg>
<svg class="a" style="left:5.5px;top:1px" width="13" height="13" viewBox="0 0 13 13"><circle cx="6.6" cy="6.5" r="6.1" fill="#fff"/><path d="M0.3 6.8Q4 3.2 9.8 3.6M3.2 9.6Q9 9.8 12.9 6.3" stroke="#2c8cf9" stroke-width="1.3" fill="none"/></svg>
<svg class="a" style="left:828px;top:0px" width="12" height="13" viewBox="0 0 12 13"><path d="M6 0.8Q6.8 0.8 6.8 1.6Q9.3 2.5 9.3 5.5V8.3L10.8 9.8H1.2L2.7 8.3V5.5Q2.7 2.5 5.2 1.6Q5.2 0.8 6 0.8Z" fill="#fff"/><path d="M4.6 11.2Q6 12.4 7.4 11.2" stroke="#fff" stroke-width="1.2" fill="none"/></svg>
<svg class="a" style="left:854px;top:0px" width="12" height="13" viewBox="0 0 12 13"><path d="M6 1L11.5 6H10V11H7.3V8H4.7V11H2V6H0.5Z" fill="#fff"/></svg>
<svg class="a" style="left:879px;top:0px" width="12" height="13" viewBox="0 0 12 13"><rect x="0.5" y="1.5" width="9" height="6.5" fill="#fff"/><path d="M5 8V10.5M2.5 10.5H6" stroke="#fff" stroke-width="1.2"/><circle cx="9" cy="9" r="2.3" fill="#2c8cf9" stroke="#fff" stroke-width="1.2"/></svg>
<svg class="a" style="left:905px;top:0px" width="12" height="13" viewBox="0 0 12 13"><path d="M1 11V3L5 1V11ZM5.5 11V3.5L9.5 5.5V11Z" fill="#fff"/><circle cx="9.5" cy="9.5" r="2" fill="#2c8cf9" stroke="#fff" stroke-width="1.1"/></svg>
<svg class="a" style="left:931px;top:0px" width="12" height="13" viewBox="0 0 12 13"><rect x="0.5" y="0.5" width="5" height="5" fill="#fff"/><rect x="6.5" y="0.5" width="5" height="5" fill="#fff"/><rect x="0.5" y="6.5" width="5" height="5" fill="#fff"/><rect x="6.5" y="6.5" width="5" height="5" fill="#fff"/><path d="M7.5 9H10.5" stroke="#2c8cf9"/></svg>
<svg class="a" style="left:955px;top:0px" width="12" height="13" viewBox="0 0 12 13"><circle cx="6" cy="6" r="5.8" fill="#fff"/><path d="M4 3.8A3 3 0 1 0 8 3.8M6 2.3V6" stroke="#2c8cf9" stroke-width="1.3" fill="none"/></svg>
<!-- weather -->
<div class="a" style="left:706px;top:149px;width:266px;height:111px;border-radius:4px;overflow:hidden;background:linear-gradient(180deg,#3f86d9 0%,#3a7dd3 50%,#306cc9 100%)">
 <div class="a" style="left:36px;top:-80px;width:240px;height:180px;background:radial-gradient(ellipse at 50% 44%,rgba(255,255,255,0.42) 0%,rgba(255,255,255,0.16) 25%,rgba(255,255,255,0.05) 50%,rgba(255,255,255,0) 70%)"></div>
 <div class="a" style="left:0;top:0;width:266px;height:111px;background:repeating-conic-gradient(from 90deg at 156px -4px,rgba(255,255,255,0) 0deg,rgba(255,255,255,0.07) 3deg,rgba(255,255,255,0) 6deg,rgba(255,255,255,0) 11deg);-webkit-mask-image:radial-gradient(circle at 156px 0,#000 0,rgba(0,0,0,0.6) 60px,transparent 110px)"></div>
 <div class="a" style="left:-15px;top:20px;width:60px;height:70px;background:radial-gradient(ellipse at 50% 50%,rgba(255,255,255,0.14) 0%,rgba(255,255,255,0) 70%)"></div>
 <div class="a" style="left:60px;top:75px;width:70px;height:40px;background:radial-gradient(ellipse at 50% 50%,rgba(255,255,255,0.08) 0%,rgba(255,255,255,0) 70%)"></div>
 <div class="a" style="left:90px;top:10px;width:60px;height:40px;background:radial-gradient(ellipse at 50% 50%,rgba(255,255,255,0.07) 0%,rgba(255,255,255,0) 70%)"></div>
 <div class="a" style="left:134px;top:30px;width:1px;height:81px;background:rgba(255,255,255,0.35)"></div>
</div>
<div class="a nw" style="left:712px;top:161px;font-size:9.5px;line-height:12px;color:#fff;-webkit-text-stroke:0.2px #fff">北京 切换</div>
<div class="a nw" style="left:923.5px;top:161px;font-size:9px;line-height:12px;color:#fff;-webkit-text-stroke:0.2px #fff">和风天气</div>
<div class="a" style="left:962px;top:154px;width:18px;height:22px;background:rgba(218,218,220,0.85)"></div><svg class="a" style="left:965px;top:157px" width="10" height="12" viewBox="0 0 10 12" fill="none" stroke="#fff" stroke-width="0.9"><circle cx="5" cy="3.5" r="2.5"/><path d="M1 11.5Q1 7 5 7Q9 7 9 11.5"/></svg>
<svg class="a" style="left:722px;top:195px" width="34" height="34" viewBox="0 0 34 34"><circle cx="17" cy="17" r="10.2" fill="#f2b12d"/>
<g fill="#f6d868"><circle cx="30.30" cy="17.00" r="1.45"/><circle cx="26.40" cy="26.40" r="1.45"/><circle cx="17.00" cy="30.30" r="1.45"/><circle cx="7.60" cy="26.40" r="1.45"/><circle cx="3.70" cy="17.00" r="1.45"/><circle cx="7.60" cy="7.60" r="1.45"/><circle cx="17.00" cy="3.70" r="1.45"/><circle cx="26.40" cy="7.60" r="1.45"/></g></svg>
<div class="a nw" style="left:766.5px;top:193px;font-size:16px;line-height:18px;color:#fff">25°</div>
<div class="a nw" style="left:767.5px;top:217px;font-size:9px;line-height:11px;color:#fff">晴</div>
<div class="a" style="left:811px;top:218px;width:2px;height:9px;background:#8fd66a"></div>
<div class="a nw" style="left:815px;top:217px;font-size:9px;line-height:11px;color:#8fd66a">优</div>
<svg class="a" style="left:722px;top:244px" width="7" height="8" viewBox="0 0 7 8"><path d="M3 1Q5 4 5 5.5A2 2 0 0 1 1 5.5Q1 4 3 1Z" fill="#e6f0fb"/><circle cx="6" cy="1.5" r="0.8" fill="#fff"/></svg>
<div class="a nw" style="left:738px;top:242px;font-size:9px;line-height:12px;color:#fff">未来两小时无降水</div>
<div class="a nw" style="left:834px;width:60px;text-align:center;top:183.5px;font-size:9.5px;line-height:12px;color:#fff">今天</div>
<svg class="a" style="left:856px;top:204.5px" width="16" height="16" viewBox="0 0 16 16"><circle cx="8" cy="8" r="5" fill="#f2b12d"/><g stroke="#f5c542" stroke-width="1.1"><path d="M8 0.5V2.3M8 13.7V15.5M0.5 8H2.3M13.7 8H15.5M2.7 2.7L4 4M12 12L13.3 13.3M2.7 13.3L4 12M12 4L13.3 2.7"/></g></svg>
<div class="a nw" style="left:834px;width:60px;text-align:center;top:231.5px;font-size:9.5px;line-height:12px;color:#fff">15°/32°</div>
<div class="a nw" style="left:834px;width:60px;text-align:center;top:243.5px;font-size:9.5px;line-height:12px;color:#8fd66a">优</div>
<div class="a nw" style="left:876px;width:60px;text-align:center;top:183.5px;font-size:9.5px;line-height:12px;color:#fff">明天</div>
<svg class="a" style="left:898px;top:204.5px" width="16" height="16" viewBox="0 0 16 16"><circle cx="8" cy="8" r="5" fill="#f2b12d"/><g stroke="#f5c542" stroke-width="1.1"><path d="M8 0.5V2.3M8 13.7V15.5M0.5 8H2.3M13.7 8H15.5M2.7 2.7L4 4M12 12L13.3 13.3M2.7 13.3L4 12M12 4L13.3 2.7"/></g></svg>
<div class="a nw" style="left:876px;width:60px;text-align:center;top:231.5px;font-size:9.5px;line-height:12px;color:#fff">18°/32°</div>
<div class="a nw" style="left:876px;width:60px;text-align:center;top:243.5px;font-size:9.5px;line-height:12px;color:#d8d35e">良</div>
<div class="a nw" style="left:917px;width:60px;text-align:center;top:183.5px;font-size:9.5px;line-height:12px;color:#fff">后天</div>
<svg class="a" style="left:939px;top:204.5px" width="16" height="16" viewBox="0 0 16 16"><circle cx="8" cy="8" r="5" fill="#f2b12d"/><g stroke="#f5c542" stroke-width="1.1"><path d="M8 0.5V2.3M8 13.7V15.5M0.5 8H2.3M13.7 8H15.5M2.7 2.7L4 4M12 12L13.3 13.3M2.7 13.3L4 12M12 4L13.3 2.7"/></g></svg>
<div class="a nw" style="left:917px;width:60px;text-align:center;top:231.5px;font-size:9.5px;line-height:12px;color:#fff">20°/33°</div>
<div class="a nw" style="left:917px;width:60px;text-align:center;top:243.5px;font-size:9.5px;line-height:12px;color:#f2a36f">轻度</div>

<!-- watermarks -->
<svg class="a" style="left:0px;top:505px" width="50" height="32" viewBox="0 0 50 32">
<g fill="none" stroke="rgba(200,225,255,0.9)" stroke-width="2.6" stroke-linecap="round">
<path d="M9.5 10.5L12.6 7.5V27"/><path d="M16 17Q15 26.5 23 27.5Q30 28 32 19"/><path d="M16.5 14L20 18"/></g>
<circle cx="22" cy="20.5" r="2" fill="none" stroke="rgba(200,225,255,0.9)" stroke-width="1.6"/>
<path d="M16 14.5L21 12" stroke="rgba(200,225,255,0.8)" stroke-width="1.4"/>
<circle cx="30.5" cy="9" r="4.5" fill="none" stroke="rgba(205,228,255,0.95)" stroke-width="1.8"/>
<circle cx="40.5" cy="9.5" r="4.5" fill="rgba(190,190,190,0.55)" stroke="rgba(255,255,255,0.95)" stroke-width="1.8"/>
</svg>
<div class="a nw" style="left:52.5px;top:511px;font-size:22px;letter-spacing:-0.4px;line-height:26px;font-weight:bold;color:#fff;text-shadow:0 0 3px rgba(0,0,0,0.45),1px 1px 2px rgba(0,0,0,0.3)">大数跨境</div>
<svg class="a" style="left:884px;top:470px" width="52" height="42" viewBox="0 0 52 42">
<path d="M19 5C10 5 4 11 4 17.5C4 21 6 24 9 26L7.5 31L13 28C15 28.7 17 29 19 29C28 29 34 23.5 34 17.5C34 11 28 5 19 5Z" fill="rgba(255,255,255,0.8)" stroke="#9a9a9a" stroke-width="0.9"/>
<path d="M33 17C25.5 17 20.5 21.5 20.5 27C20.5 32.5 25.5 37 33 37C34.5 37 36 36.8 37.5 36.3L42 38.5L41 34.5C43.5 32.7 45.5 30 45.5 27C45.5 21.5 40.5 17 33 17Z" fill="rgba(255,255,255,0.95)" stroke="#707070" stroke-width="1"/>
<g fill="none" stroke="#777" stroke-width="0.8"><circle cx="14" cy="12" r="1.4"/><circle cx="25.5" cy="12" r="1.4"/><circle cx="28.5" cy="23" r="1.4"/><circle cx="38" cy="23" r="1.4"/></g>
</svg>
<div class="a nw" style="left:940px;top:477px;font-size:26px;line-height:32px;color:#fff;text-shadow:-0.8px 0.8px 0.8px rgba(0,0,0,.75),0 0 1.5px rgba(0,0,0,.4)">时空智友</div>
</body></html>
